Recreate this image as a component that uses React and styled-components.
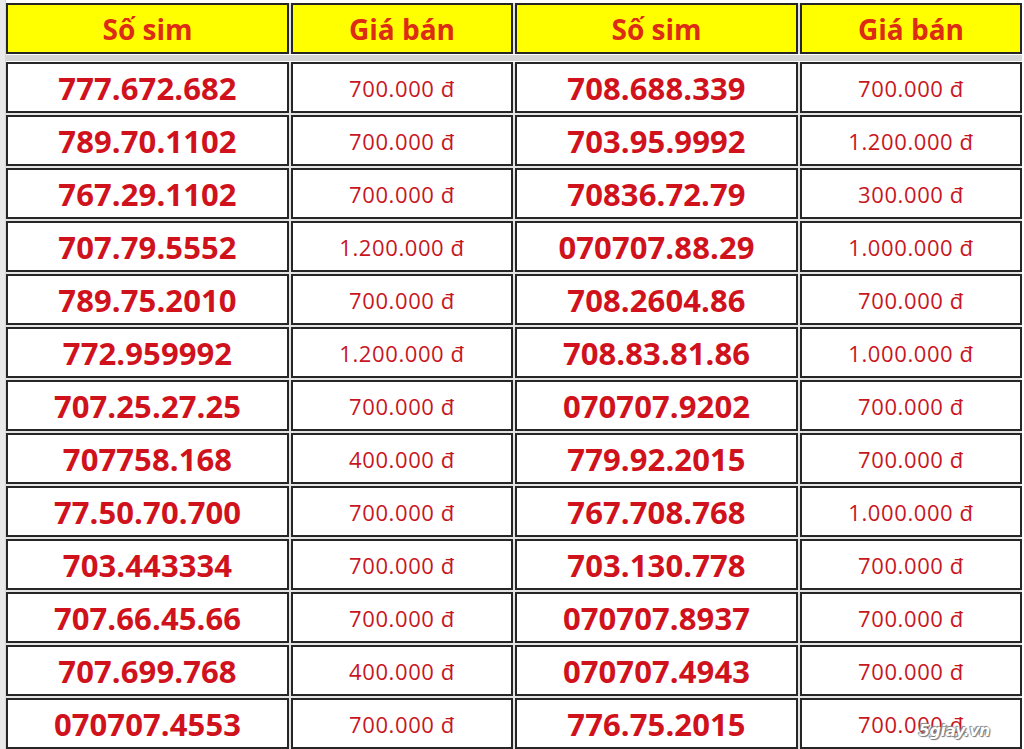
import styled, { createGlobalStyle } from 'styled-components';

const rows = [
  ['777.672.682', '700.000 đ', '708.688.339', '700.000 đ'],
  ['789.70.1102', '700.000 đ', '703.95.9992', '1.200.000 đ'],
  ['767.29.1102', '700.000 đ', '70836.72.79', '300.000 đ'],
  ['707.79.5552', '1.200.000 đ', '070707.88.29', '1.000.000 đ'],
  ['789.75.2010', '700.000 đ', '708.2604.86', '700.000 đ'],
  ['772.959992', '1.200.000 đ', '708.83.81.86', '1.000.000 đ'],
  ['707.25.27.25', '700.000 đ', '070707.9202', '700.000 đ'],
  ['707758.168', '400.000 đ', '779.92.2015', '700.000 đ'],
  ['77.50.70.700', '700.000 đ', '767.708.768', '1.000.000 đ'],
  ['703.443334', '700.000 đ', '703.130.778', '700.000 đ'],
  ['707.66.45.66', '700.000 đ', '070707.8937', '700.000 đ'],
  ['707.699.768', '400.000 đ', '070707.4943', '700.000 đ'],
  ['070707.4553', '700.000 đ', '776.75.2015', '700.000 đ'],
];

const GlobalStyle = createGlobalStyle`
  html, body {
    margin: 0;
    padding: 0;
    background: #fff;
    overflow: hidden;
  }
`;

const Page = styled.div`
  display: flex;
  width: 1024px;
  height: 749px;
  background: #fff;
  position: relative;
`;

const RowHeaders = styled.div`
  width: 5px;
  background: #e9e9e9;
  border-right: 1px solid #d6d6d6;
`;

const Sheet = styled.div`
  padding: 3px 0 0 0;
  display: flex;
  flex-direction: column;
`;

const Grid = styled.div`
  display: grid;
  grid-template-columns: 283px 222px 283px 222px;
  grid-auto-rows: ${({ rowHeight }) => rowHeight}px;
  gap: 2px;
  background: #e4e4e4;
`;

const Band = styled.div`
  height: 6px;
  margin: 1px 0 1px;
  background: #d4d4d4;
`;

const Cell = styled.div`
  box-sizing: border-box;
  border: 2px solid #262626;
  background: ${({ head }) => (head ? '#ffff00' : '#fff')};
  display: flex;
  align-items: center;
  justify-content: center;
  white-space: nowrap;
`;

const HeadText = styled.span`
  font-family: "Open Sans", "Liberation Sans", sans-serif;
  font-weight: 700;
  font-size: 28px;
  color: #dc2c14;
`;

const SimText = styled.span`
  font-family: "Open Sans", "Liberation Sans", sans-serif;
  font-weight: 700;
  font-size: 31px;
  letter-spacing: 0.1px;
  color: #d0121d;
`;

const PriceText = styled.span`
  font-family: "Open Sans", "Liberation Sans", sans-serif;
  font-weight: 400;
  font-size: 22px;
  letter-spacing: 0.6px;
  color: #c8161f;
`;

const Watermark = styled.div`
  position: absolute;
  right: 34px;
  bottom: 9px;
  font-family: "DejaVu Sans", sans-serif;
  font-weight: 700;
  font-style: italic;
  font-size: 16px;
  letter-spacing: -0.5px;
  color: #fff;
  text-shadow: 0 0 1px #666, 1px 1px 1px #777, -1px -1px 1px #888;
`;

const App = () => (
  <Page>
    <GlobalStyle />
    <RowHeaders />
    <Sheet>
      <Grid rowHeight={51}>
        {['Số sim', 'Giá bán', 'Số sim', 'Giá bán'].map((label, i) => (
          <Cell head key={i}>
            <HeadText>{label}</HeadText>
          </Cell>
        ))}
      </Grid>
      <Band />
      <Grid rowHeight={51}>
        {rows.map((row, r) =>
          row.map((value, c) => (
            <Cell key={`${r}-${c}`}>
              {c % 2 === 0 ? <SimText>{value}</SimText> : <PriceText>{value}</PriceText>}
            </Cell>
          ))
        )}
      </Grid>
    </Sheet>
    <Watermark>5giay.vn</Watermark>
  </Page>
);

export default App;
